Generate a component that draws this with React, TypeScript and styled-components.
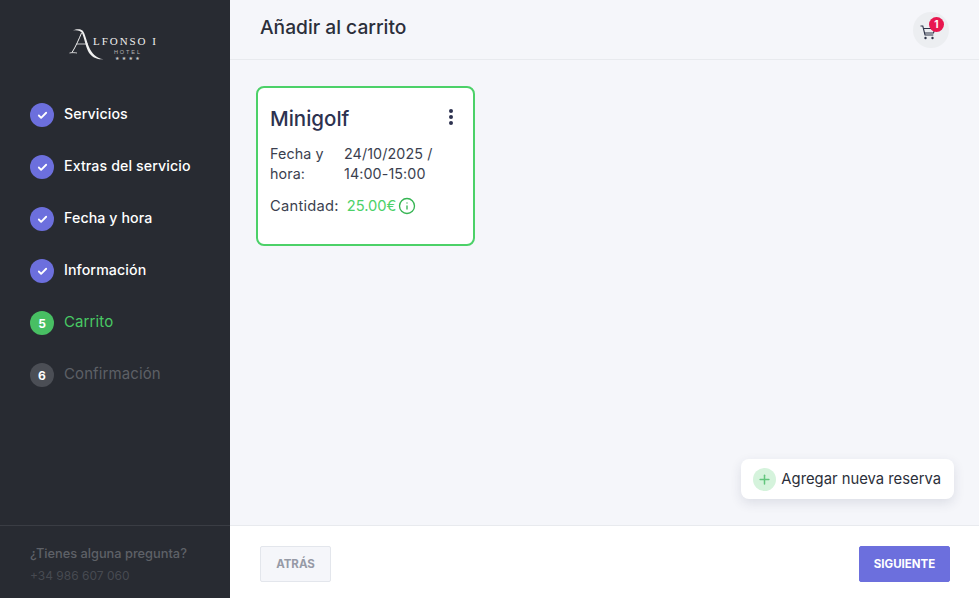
import React from 'react';
import styled, { createGlobalStyle } from 'styled-components';
import { Check, Plus, Info } from 'lucide-react';

const GlobalStyle = createGlobalStyle`
  html, body {
    margin: 0;
    padding: 0;
    height: 100%;
    font-family: Inter, "Open Sans", sans-serif;
  }
  #root {
    height: 100%;
  }
`;

const Page = styled.div`
  display: flex;
  width: 979px;
  height: 598px;
  overflow: hidden;
`;

const Sidebar = styled.aside`
  width: 230px;
  flex-shrink: 0;
  display: flex;
  flex-direction: column;
  background-color: #282b32;
`;

const LogoWrap = styled.div`
  height: 103px;
  box-sizing: border-box;
  padding: 29px 0 0 69px;
`;

const Logo = styled.div`
  position: relative;
  width: 88px;
  height: 31px;
  color: #efefef;
`;

const LogoSwoosh = styled.svg`
  position: absolute;
  left: 0;
  top: 0;
`;

const LogoName = styled.span`
  position: absolute;
  left: 24px;
  top: 6px;
  font-family: "Liberation Serif", serif;
  font-size: 11px;
  line-height: 13px;
  letter-spacing: 1.95px;
  white-space: nowrap;
`;

const LogoHotel = styled.span`
  position: absolute;
  left: 45px;
  top: 20px;
  font-family: "Liberation Sans", sans-serif;
  font-size: 5.5px;
  line-height: 7px;
  letter-spacing: 1.9px;
  color: #b5b5b5;
`;

const LogoStars = styled.span`
  position: absolute;
  left: 46px;
  top: 26px;
  font-family: "DejaVu Sans", sans-serif;
  font-size: 5px;
  line-height: 6px;
  letter-spacing: 2.3px;
  color: #c9c9c9;
`;

const Steps = styled.ul`
  list-style: none;
  margin: 0;
  padding: 0 0 0 30px;
  display: flex;
  flex-direction: column;
  gap: 28px;
  flex: 1;
`;

const Step = styled.li`
  display: flex;
  align-items: center;
  gap: 10px;
  height: 24px;
`;

type StepState = 'done' | 'active' | 'pending';

const stepCircle: Record<StepState, string> = {
  done: '#6c6fdd',
  active: '#48bf63',
  pending: '#4b4e55',
};

const stepText: Record<StepState, string> = {
  done: '#ffffff',
  active: '#48c964',
  pending: '#5d6066',
};

const StepCircle = styled.span<{ $state: StepState }>`
  width: 24px;
  height: 24px;
  border-radius: 50%;
  display: flex;
  align-items: center;
  justify-content: center;
  background-color: ${(p) => stepCircle[p.$state]};
  color: #ffffff;
  font-size: 12px;
  font-weight: 700;
`;

const StepLabel = styled.span<{ $state: StepState }>`
  padding-bottom: 4px;
  color: ${(p) => stepText[p.$state]};
  font-size: ${(p) => (p.$state === 'done' ? '14.2px' : '15px')};
  font-weight: ${(p) => (p.$state === 'done' ? 500 : 400)};
  letter-spacing: 0.1px;
`;

const Help = styled.div`
  height: 73px;
  box-sizing: border-box;
  border-top: 1px solid #3a3d44;
  padding: 17px 0 0 30px;
  line-height: 22px;
`;

const HelpTitle = styled.div`
  color: #5e6167;
  font-size: 12.8px;
  font-weight: 500;
`;

const HelpPhone = styled.div`
  color: #474a51;
  font-size: 12px;
`;

const Main = styled.main`
  flex: 1;
  display: flex;
  flex-direction: column;
  background-color: #f5f6fa;
`;

const Header = styled.header`
  height: 60px;
  box-sizing: border-box;
  display: flex;
  align-items: center;
  justify-content: space-between;
  padding: 0 30px 6px 30px;
  border-bottom: 1px solid #e8eaee;
`;

const Title = styled.h1`
  margin: 0;
  font-size: 19.2px;
  font-weight: 500;
  color: #2b2f3a;
`;

const CartButton = styled.div`
  position: relative;
  width: 36px;
  height: 36px;
  margin-top: 6px;
  border-radius: 50%;
  background-color: #eceef1;
  display: flex;
  align-items: center;
  justify-content: center;
`;

const CartIcon = styled.svg`
  margin: 6px 6px 0 0;
`;

const CartBadge = styled.span`
  position: absolute;
  top: 5px;
  right: 5px;
  width: 15px;
  height: 15px;
  border-radius: 50%;
  background-color: #e8174f;
  color: #ffffff;
  font-size: 10px;
  font-weight: 700;
  display: flex;
  align-items: center;
  justify-content: center;
`;

const Content = styled.div`
  flex: 1;
  display: flex;
  flex-direction: column;
  justify-content: space-between;
  padding: 26px 25px 26px 26px;
`;

const Card = styled.section`
  width: 219px;
  height: 160px;
  box-sizing: border-box;
  border: 2px solid #4cd168;
  border-radius: 8px;
  background-color: #ffffff;
  padding: 16px 12px 0;
  color: #3b3f4f;
`;

const CardTop = styled.div`
  display: flex;
  justify-content: space-between;
  align-items: flex-start;
`;

const CardTitle = styled.h2`
  margin: 0;
  font-size: 20.5px;
  line-height: 30px;
  font-weight: 500;
  color: #2d3250;
`;

const Dots = styled.div`
  display: flex;
  flex-direction: column;
  gap: 2px;
  padding: 5px 8px 0 0;
`;

const Dot = styled.span`
  width: 4px;
  height: 4px;
  border-radius: 50%;
  background-color: #2d3250;
`;

const DateRow = styled.div`
  display: grid;
  grid-template-columns: 74px 1fr;
  margin-top: 10px;
  font-size: 14.3px;
  line-height: 20px;
  letter-spacing: 0.1px;
`;

const PriceRow = styled.div`
  display: flex;
  align-items: center;
  margin-top: 12px;
  font-size: 14.7px;
  line-height: 20px;
`;

const PriceLabel = styled.span`
  letter-spacing: 0.25px;
`;

const Price = styled.span`
  margin-left: 8px;
  margin-right: 2px;
  color: #4cd168;
`;

const PriceInfo = styled.span`
  display: flex;
  color: #36b553;
`;

const AddButton = styled.div`
  align-self: flex-end;
  display: flex;
  align-items: center;
  gap: 5px;
  height: 40px;
  padding: 0 13px 0 12px;
  border-radius: 8px;
  background-color: #ffffff;
  box-shadow: 0 4px 12px rgba(40, 50, 80, 0.12);
  font-size: 14.8px;
  color: #2b2f3a;
`;

const AddIcon = styled.span`
  width: 23px;
  height: 23px;
  border-radius: 50%;
  background-color: #d5f3dc;
  color: #62c57c;
  display: flex;
  align-items: center;
  justify-content: center;
`;

const Footer = styled.footer`
  height: 73px;
  box-sizing: border-box;
  display: flex;
  align-items: center;
  justify-content: space-between;
  padding: 4px 29px 0 30px;
  background-color: #ffffff;
  border-top: 1px solid #e8eaee;
`;

const NavButton = styled.button<{ $primary?: boolean }>`
  height: 36px;
  box-sizing: border-box;
  width: ${(p) => (p.$primary ? '91px' : '71px')};
  border-radius: 2px;
  border: 1px solid ${(p) => (p.$primary ? '#6c6fdd' : '#e3e6ec')};
  background-color: ${(p) => (p.$primary ? '#6c6fdd' : '#f5f6fa')};
  color: ${(p) => (p.$primary ? '#ffffff' : '#969aa6')};
  font-family: inherit;
  font-size: 11.5px;
  font-weight: 700;
  padding: 0;
`;

const steps: { label: string; state: StepState; number: number }[] = [
  { label: 'Servicios', state: 'done', number: 1 },
  { label: 'Extras del servicio', state: 'done', number: 2 },
  { label: 'Fecha y hora', state: 'done', number: 3 },
  { label: 'Información', state: 'done', number: 4 },
  { label: 'Carrito', state: 'active', number: 5 },
  { label: 'Confirmación', state: 'pending', number: 6 },
];

export default function App() {
  return (
    <>
      <GlobalStyle />
      <Page>
        <Sidebar>
          <LogoWrap>
            <Logo>
              <LogoSwoosh width="36" height="31" viewBox="0 0 36 31" fill="none">
                <path
                  d="M4 1.5C7 0 11 -0.5 13.5 1.5C16 4 17.5 12 20 18C22.5 24 27 29.5 34.5 30.2C28 31 22 28 19 22C16.5 16.5 15 8 13 4C12 2 8 0.5 4 1.5Z"
                  fill="#f0f0f0"
                />
                <path d="M12.5 4C10 10 6.5 18 3 23.5" stroke="#f0f0f0" strokeWidth="1" />
                <path d="M0.5 24C2 23.5 6 23.5 8 24" stroke="#f0f0f0" strokeWidth="0.8" />
                <path d="M7.5 15H19" stroke="#f0f0f0" strokeWidth="0.8" />
              </LogoSwoosh>
              <LogoName>LFONSO I</LogoName>
              <LogoHotel>HOTEL</LogoHotel>
              <LogoStars>★★★★</LogoStars>
            </Logo>
          </LogoWrap>
          <Steps>
            {steps.map((step) => (
              <Step key={step.label}>
                <StepCircle $state={step.state}>
                  {step.state === 'done' ? <Check size={11} strokeWidth={4} /> : step.number}
                </StepCircle>
                <StepLabel $state={step.state}>{step.label}</StepLabel>
              </Step>
            ))}
          </Steps>
          <Help>
            <HelpTitle>¿Tienes alguna pregunta?</HelpTitle>
            <HelpPhone>+34 986 607 060</HelpPhone>
          </Help>
        </Sidebar>
        <Main>
          <Header>
            <Title>Añadir al carrito</Title>
            <CartButton>
              <CartIcon width="16" height="15" viewBox="0 0 16 15" fill="none" stroke="#2d3247" strokeWidth="1.1">
                <path d="M0.5 1H2.8L5 10H13.3" />
                <path d="M3.4 3.5H15L13.5 8H4.5" />
                <circle cx="5.5" cy="13" r="1.2" fill="#2d3247" stroke="none" />
                <circle cx="12.5" cy="13" r="1.2" fill="#2d3247" stroke="none" />
              </CartIcon>
              <CartBadge>1</CartBadge>
            </CartButton>
          </Header>
          <Content>
            <Card>
              <CardTop>
                <CardTitle>Minigolf</CardTitle>
                <Dots>
                  <Dot />
                  <Dot />
                  <Dot />
                </Dots>
              </CardTop>
              <DateRow>
                <span>Fecha y hora:</span>
                <span>24/10/2025 / 14:00-15:00</span>
              </DateRow>
              <PriceRow>
                <PriceLabel>Cantidad:</PriceLabel>
                <Price>25.00€</Price>
                <PriceInfo>
                  <Info size={18} strokeWidth={1.8} />
                </PriceInfo>
              </PriceRow>
            </Card>
            <AddButton>
              <AddIcon>
                <Plus size={15} strokeWidth={2.4} />
              </AddIcon>
              Agregar nueva reserva
            </AddButton>
          </Content>
          <Footer>
            <NavButton>ATRÁS</NavButton>
            <NavButton $primary>SIGUIENTE</NavButton>
          </Footer>
        </Main>
      </Page>
    </>
  );
}
